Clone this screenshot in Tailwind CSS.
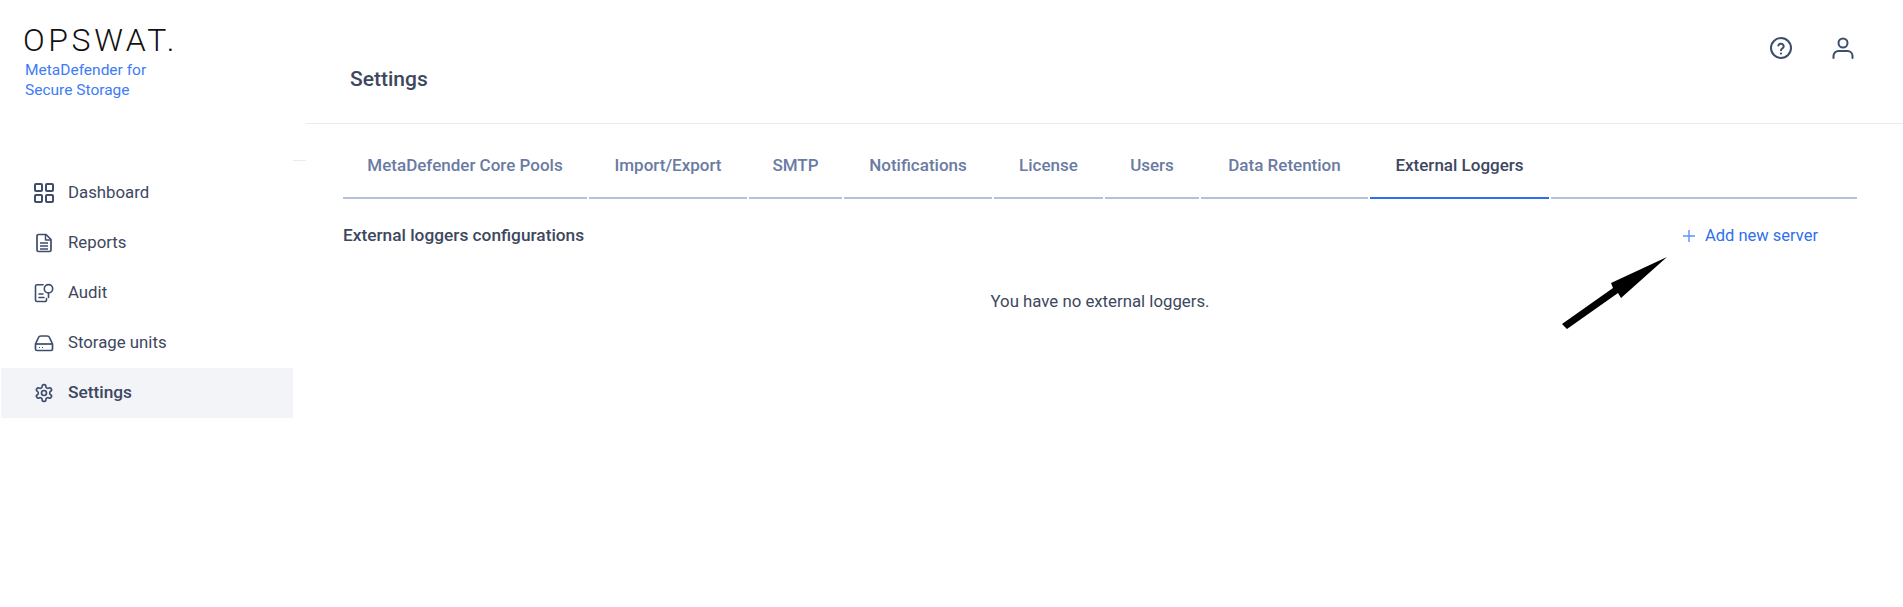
<!DOCTYPE html>
<html lang="en">
<head>
    <meta charset="UTF-8">
    <title>Settings</title>
    <script src="https://cdn.jsdelivr.net/npm/@tailwindcss/browser@4"></script>
</head>
<body class="bg-white font-['Roboto',sans-serif] text-[#3d4760] overflow-hidden">
    <div class="relative flex h-[607px] w-[1903px]">
        <!-- Sidebar -->
        <aside class="w-[306px] shrink-0">
            <div class="h-[160px] pl-[23px] pt-[28px] relative">
                <div class="text-[32px] leading-[25px] tracking-[3.600px] font-light text-[#111] h-[25px]">OPSWAT.</div>
                <div class="mt-[7px] pl-[2px] text-[15.500px] leading-[20px] text-[#3d7cf5]">MetaDefender for<br>Secure Storage</div>
                <div class="absolute left-[293px] top-[160px] h-px w-[13px] bg-[#e8ebf3]"></div>
            </div>
            <nav class="w-[293px] pl-px mt-[8px] text-[16.800px]">
                <a class="flex h-[50px] items-center pl-[33px] gap-[14px]">
                    <svg class="w-5 h-5" viewBox="0 0 20 20" fill="none" stroke="#3d4d6e" stroke-width="2"><rect x="1" y="1" width="7" height="7" rx="1"/><rect x="12" y="1" width="7" height="7" rx="1"/><rect x="1" y="12" width="7" height="7" rx="1"/><rect x="12" y="12" width="7" height="7" rx="1"/></svg>
                    <span>Dashboard</span>
                </a>
                <a class="flex h-[50px] items-center pl-[33px] gap-[14px]">
                    <svg class="w-5 h-5" viewBox="0 0 20 20" fill="none" stroke="#3d4d6e" stroke-width="1.7" stroke-linejoin="round"><path d="M3 3a1.5 1.5 0 0 1 1.5-1.5H12L17 6.5V17a1.5 1.5 0 0 1-1.5 1.5h-11A1.5 1.5 0 0 1 3 17z"/><path d="M11.5 2v5h5M6 10h8M6 13h8M6 16h8" stroke-width="1.4"/></svg>
                    <span>Reports</span>
                </a>
                <a class="flex h-[50px] items-center pl-[33px] gap-[14px]">
                    <svg class="w-5 h-5" viewBox="0 0 20 20" fill="none" stroke="#3d4d6e" stroke-width="1.6" stroke-linecap="round"><path d="M9 1.800H3A1.500 1.500 0 0 0 1.500 3.300V17A1.500 1.500 0 0 0 3 18.500h8a1.500 1.500 0 0 0 1.500-1.500v-1.500"/><circle cx="14.500" cy="5.800" r="4.200"/><path d="M14.500 10v4.500M5 11h4M5 14.500h5"/></svg>
                    <span>Audit</span>
                </a>
                <a class="flex h-[50px] items-center pl-[33px] gap-[14px]">
                    <svg class="w-5 h-5" viewBox="0 0 20 20" fill="none" stroke="#3d4d6e" stroke-width="1.7" stroke-linejoin="round"><path d="M1.500 11 4.500 4.500Q5 3 7 3h6q2 0 2.500 1.500l3 6.500v5a1.500 1.500 0 0 1-1.500 1.500H3A1.500 1.500 0 0 1 1.500 16z"/><path d="M1.500 11h17"/><path d="M5 14.500h1M8 14.500h1" stroke-width="1.200"/></svg>
                    <span>Storage units</span>
                </a>
                <a class="flex h-[50px] items-center pl-[33px] gap-[14px] bg-[#f2f4f8] font-medium text-[17.300px]">
                    <svg class="w-5 h-5" viewBox="0 0 24 24" fill="none" stroke="#3d4d6e" stroke-width="2" stroke-linecap="round" stroke-linejoin="round"><path d="M12.220 2h-.44a2 2 0 0 0-2 2v.18a2 2 0 0 1-1 1.730l-.43.250a2 2 0 0 1-2 0l-.15-.080a2 2 0 0 0-2.730.730l-.22.380a2 2 0 0 0 .730 2.730l.15.100a2 2 0 0 1 1 1.720v.510a2 2 0 0 1-1 1.740l-.15.090a2 2 0 0 0-.730 2.730l.22.380a2 2 0 0 0 2.730.730l.15-.080a2 2 0 0 1 2 0l.43.250a2 2 0 0 1 1 1.730V20a2 2 0 0 0 2 2h.44a2 2 0 0 0 2-2v-.18a2 2 0 0 1 1-1.730l.43-.250a2 2 0 0 1 2 0l.15.080a2 2 0 0 0 2.730-.730l.22-.390a2 2 0 0 0-.730-2.730l-.15-.080a2 2 0 0 1-1-1.740v-.500a2 2 0 0 1 1-1.740l.15-.090a2 2 0 0 0 .730-2.730l-.22-.380a2 2 0 0 0-2.730-.730l-.15.080a2 2 0 0 1-2 0l-.43-.250a2 2 0 0 1-1-1.730V4a2 2 0 0 0-2-2z"/><circle cx="12" cy="12" r="3"/></svg>
                    <span>Settings</span>
                </a>
            </nav>
        </aside>

        <!-- Main -->
        <main class="flex-1 min-w-0">
            <header class="h-[124px] border-b border-[#e8ebf3] flex justify-between">
                <h1 class="pl-[44px] pt-[66px] text-[21px] leading-[26px] font-medium">Settings</h1>
                <div class="flex gap-[38px] pr-[48px] pt-[36px] h-fit">
                    <svg class="w-6 h-6" viewBox="0 0 24 24" fill="none" stroke="#3d4d6e" stroke-width="2" stroke-linecap="round"><circle cx="12" cy="12" r="10"/><path d="M9.300 9.500a2.800 2.800 0 0 1 5.400.900c0 1.800-2.700 2.300-2.700 3.800"/><path d="M12 17.500v.1" stroke-width="2.200"/></svg>
                    <svg class="w-6 h-6" viewBox="0 0 24 24" fill="none" stroke="#3d4d6e" stroke-width="2" stroke-linecap="round"><circle cx="12" cy="7" r="4.500"/><path d="M2.500 22v-2a5 5 0 0 1 5-5h9a5 5 0 0 1 5 5v2"/></svg>
                </div>
            </header>

            <div class="pl-[37px] pr-[46px]">
                <div class="flex gap-[2px] h-[75px] text-[17px] font-medium text-[#6a7ba3]">
                    <a class="flex w-[244px] items-center justify-center pt-[10px] border-b-2 border-[#b4c1dc]">MetaDefender Core Pools</a>
                    <a class="flex w-[158px] items-center justify-center pt-[10px] border-b-2 border-[#b4c1dc]">Import/Export</a>
                    <a class="flex w-[93px] items-center justify-center pt-[10px] border-b-2 border-[#b4c1dc]">SMTP</a>
                    <a class="flex w-[148px] items-center justify-center pt-[10px] border-b-2 border-[#b4c1dc]">Notifications</a>
                    <a class="flex w-[109px] items-center justify-center pt-[10px] border-b-2 border-[#b4c1dc]">License</a>
                    <a class="flex w-[94px] items-center justify-center pt-[10px] border-b-2 border-[#b4c1dc]">Users</a>
                    <a class="flex w-[167px] items-center justify-center pt-[10px] border-b-2 border-[#b4c1dc]">Data Retention</a>
                    <a class="flex w-[179px] items-center justify-center pt-[10px] border-b-2 border-[#2f6fed] text-[#3d4760]">External Loggers</a>
                    <div class="flex-1 border-b-2 border-[#b4c1dc]"></div>
                </div>
                <div class="flex justify-between items-center mt-[25px] h-[24px]">
                    <h2 class="text-[17.300px] font-medium">External loggers configurations</h2>
                    <button class="flex items-center gap-[10px] pr-[39px] text-[16.500px] text-[#2f6fed]">
                        <svg class="w-[12px] h-[12px]" viewBox="0 0 12 12" stroke="#5b93fb" stroke-width="1.400"><path d="M6 0v12M0 6h12"/></svg>
                        Add new server
                    </button>
                </div>
                <p class="mt-[41px] text-center text-[16.800px] leading-[24px]">You have no external loggers.</p>
            </div>
        </main>

        <!-- Annotation arrow -->
        <svg class="absolute left-[1555px] top-[250px] w-[120px] h-[85px]" viewBox="1555 250 120 85"><polygon points="1667,257 1611,283 1613,288 1562,324 1567,329 1618,293 1621,298" fill="#000"/></svg>
    </div>
</body>
</html>
